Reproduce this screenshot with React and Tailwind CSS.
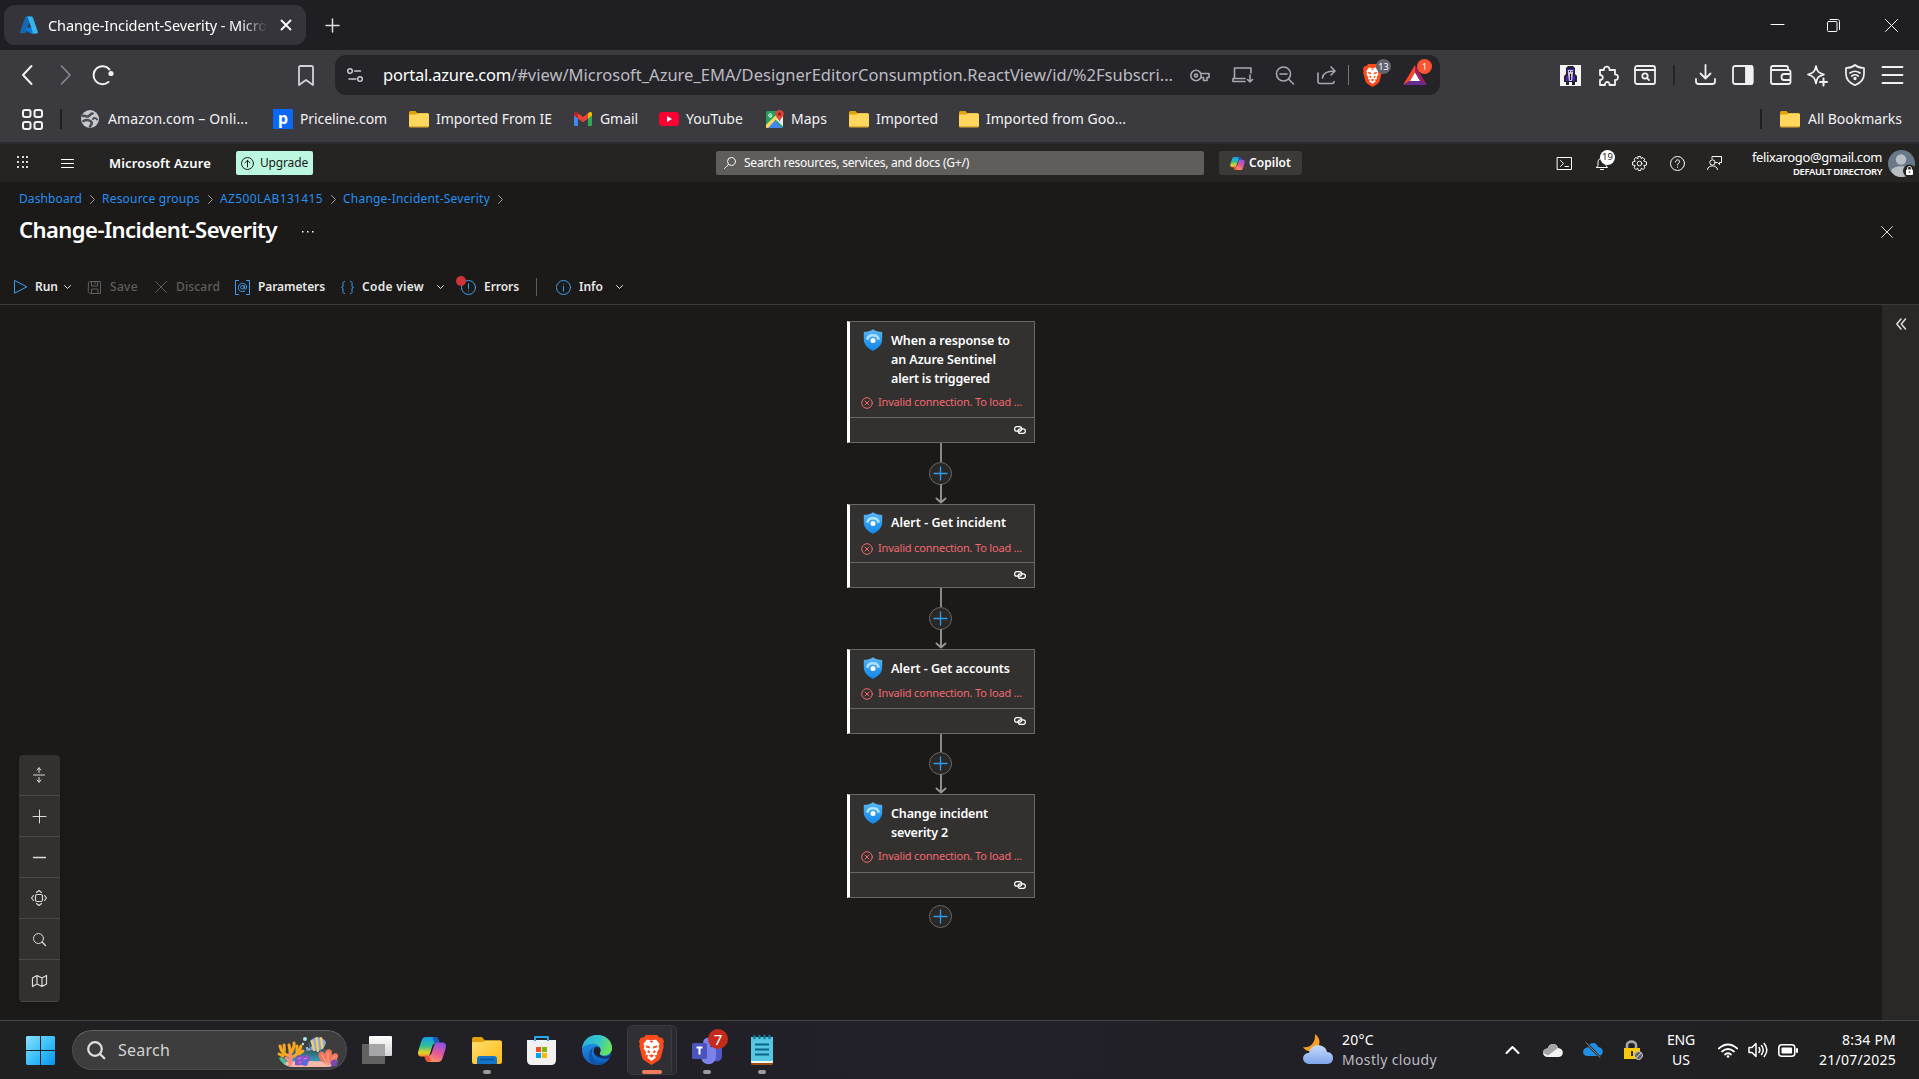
import React, { useLayoutEffect, useRef, useState } from "react";

/* Text that tracks itself in or out so that it fills a given width */
function Fit({ w, className = "", children }) {
  const ref = useRef(null);
  const [spacing, setSpacing] = useState(0);
  useLayoutEffect(() => {
    const natural = ref.current.getBoundingClientRect().width;
    setSpacing((w - natural) / String(children).length);
  }, [w, children]);
  return (
    <span className={"block shrink-0 whitespace-nowrap " + className} style={{ width: w }}>
      <span ref={ref} className="inline-block" style={{ letterSpacing: spacing }}>{children}</span>
    </span>
  );
}

function Icon({ w, h, vb, className = "", sw = 1, children }) {
  return (
    <svg width={w} height={h || w} viewBox={vb || `0 0 ${w} ${h || w}`} fill="none" stroke="currentColor" strokeWidth={sw}
      strokeLinecap="round" strokeLinejoin="round" className={"block shrink-0 overflow-visible " + className}>
      {children}
    </svg>
  );
}

function AzureLogo() {
  return (
    <Icon w={18} h={18} className="ml-4">
      <g stroke="none">
        <path d="M6 0.5H11.5L5.6 17.3H1.2C.3 17.3-.2 16.5.1 15.7L5.2 1.1C5.3.7 5.6.5 6 .5Z" fill="#1566b3" />
        <path d="M14 11.5H6.4L5.6 14.2 10.5 17.5H15.5Z" fill="#0a78d4" />
        <path d="M7 .5H11.8C12.2.5 12.6.8 12.8 1.2L17.8 15.8C18.1 16.6 17.6 17.4 16.8 17.4H11.6C12.4 17.3 12.9 16.6 12.6 15.8L7.6 1.2C7.5.8 7.3.6 7 .5Z" fill="#35b4ee" />
      </g>
    </Icon>
  );
}

function Folder({ className = "" }) {
  return (
    <Icon w={20} h={17} className={className}>
      <path d="M0 2C0 .9.6 0 1.6 0H6.5L8.5 2.2H18.4C19.4 2.2 20 3 20 4V14H0Z" fill="#dfa20d" stroke="none" />
      <path d="M0 4.6C0 3.6.6 3.4 1.6 3.4H7L9 2.2H18.4C19.4 2.2 20 3 20 4V14.6C20 15.6 19.4 16.2 18.4 16.2H1.6C.6 16.2 0 15.6 0 14.6Z" fill="#ffd75e" stroke="none" />
      <path d="M.4 15.8H19.6" stroke="#d9a021" />
    </Icon>
  );
}

function Copilot({ w, h, className = "" }) {
  return (
    <Icon w={w} h={h} vb="0 0 28 25" className={className}>
      <defs>
        <linearGradient id="cpA" x1="0" y1="0" x2="0" y2="1"><stop offset="0" stopColor="#189dea" /><stop offset=".45" stopColor="#2bbd9a" /><stop offset=".8" stopColor="#e5d322" /><stop offset="1" stopColor="#f08b35" /></linearGradient>
        <linearGradient id="cpB" x1=".7" y1="0" x2=".3" y2="1"><stop offset="0" stopColor="#8a52e8" /><stop offset=".5" stopColor="#e2569a" /><stop offset="1" stopColor="#ff9a58" /></linearGradient>
      </defs>
      <g stroke="none">
        <path d="M8 0H17C19.5 0 20.3 2 20.9 4L21.6 6.3H17.5C15.7 6.3 14.8 7.6 14.2 9.4L11.6 17.4C11 19 10 19.6 8.4 19.6H3.6C.2 19.6-.6 17 .4 13.5L3.4 4C4.2 1.4 5.4 0 8 0Z" fill="url(#cpA)" />
        <path d="M15.5 0H17.4C19.6 0 20.4 2 20.9 4L21.6 6.3H17.8C16 6.3 15.6 3 14.6 1Z" fill="#1859c9" />
        <path d="M20 25H11C8.5 25 7.7 23 7.1 21L6.4 18.7H10.5C12.3 18.7 13.2 17.4 13.8 15.6L16.4 7.6C17 6 18 5.4 19.6 5.4H24.4C27.8 5.4 28.6 8 27.6 11.5L24.6 21C23.8 23.6 22.6 25 20 25Z" fill="url(#cpB)" />
        <path d="M6.4 18.7H10.2C11.5 18.7 12 22 13.4 24.8H11C8.5 25 7.7 23 7.1 21Z" fill="#ee5436" />
      </g>
    </Icon>
  );
}

function Brave({ w, h, className = "" }) {
  return (
    <Icon w={w} h={h} vb="0 0 25 30" className={className}>
      <g stroke="none">
        <path d="M7 0H18L20.5 2.5 23.2 2.8 25 6.2 24.2 9 24.8 11 22 22C21.6 23.6 20.6 24.8 19.2 25.8L12.5 30 5.8 25.8C4.4 24.8 3.4 23.6 3 22L.2 11 .8 9 0 6.2 1.8 2.8 4.5 2.5Z" fill="#fb4b1d" />
        <path d="M8 4.6 12.5 5.6 17 4.6 20.6 9 19.6 11 20.4 13.4 17.8 17.6 18.6 19.5 15.4 20.6 17 22.6 12.5 26 8 22.6 9.6 20.6 6.4 19.5 7.2 17.6 4.6 13.4 5.4 11 4.4 9Z" fill="#fff" />
        <path d="M6.5 10.2 11 11.4 10.6 13.4 7.2 12.4ZM18.5 10.2 14 11.4 14.4 13.4 17.8 12.4ZM9.6 15 11.2 17.2 10.2 18.6 8 16.6ZM15.4 15 13.8 17.2 14.8 18.6 17 16.6ZM12.5 19.2 15 20.6 12.5 22.8 10 20.6ZM10.5 6 12.5 8 14.5 6Z" fill="#fb4b1d" />
      </g>
    </Icon>
  );
}

function Shield() {
  return (
    <Icon w={20} h={22} className="mt-[7px]">
      <defs><linearGradient id="shG" x1="0" y1="0" x2="0" y2="1"><stop offset="0" stopColor="#5cb8f5" /><stop offset=".5" stopColor="#2f9df0" /><stop offset="1" stopColor="#1487e6" /></linearGradient></defs>
      <path d="M10 .2C12.5 2.2 15.5 2.8 19.2 2.9V10.5C19.2 16 14.5 19.6 10 21.8 5.5 19.6 .8 16 .8 10.5V2.9C4.5 2.8 7.5 2.2 10 .2Z" fill="url(#shG)" stroke="none" />
      <path d="M4.200 10.600C5.600 4.800 14.400 4.800 15.800 10.600" stroke="#aee3fb" strokeWidth="2.600" strokeLinecap="butt" />
      <circle cx="10" cy="11.600" r="2.500" fill="#fff" stroke="none" />
    </Icon>
  );
}

function ChevDown({ className = "" }) {
  return <Icon w={7} h={4} className={className}><path d="M.5 .5 3.500 3.500 6.500 .5" /></Icon>;
}
function Crumb() {
  return <Icon w={5} h={9} className="ml-[8px] mr-[7px] text-[#a19f9d]"><path d="M.5 .5 4.500 4.500 .5 8.500" /></Icon>;
}

function TabStrip() {
  return (
    <div className="flex h-[50px] items-center bg-[#1f1e23] pl-1 text-white">
      <div className="flex h-10 w-[302px] items-center rounded-[11px] bg-[#35343a]">
        <AzureLogo />
        <div className="ml-[10px] w-[219px] [mask-image:linear-gradient(to_right,black_88%,transparent)]">
          <Fit w={219} className="text-[14.500px] leading-5">Change-Incident-Severity - Micro</Fit>
        </div>
        <Icon w={10} sw={1.800} className="ml-[14px]"><path d="M.5 .5 9.500 9.500M9.500 .5 .5 9.500" /></Icon>
      </div>
      <Icon w={13} sw={1.500} className="ml-[20px] text-[#ddd]"><path d="M6.500 0V13M0 6.500H13" /></Icon>
      <Icon w={13} h={12} className="ml-auto"><path d="M0 5.500H13" /></Icon>
      <Icon w={13} h={13} className="ml-[43px]"><rect x=".5" y="2.500" width="9.500" height="10" rx="1" /><path d="M3 .5H10.500C11.800.5 12.500 1.200 12.500 2.500V10.500" /></Icon>
      <Icon w={13} h={13} className="ml-[45px] mr-[21px]"><path d="M.5 .5 12.500 12.500M12.500 .5 .5 12.500" /></Icon>
    </div>
  );
}

function AddressRow() {
  return (
    <div className="flex h-[50px] items-center text-[#f0f0f2]">
      <Icon w={10} h={18} sw={2} className="ml-[22px]"><path d="M9.500 0 1 9 9.500 18" /></Icon>
      <Icon w={10} h={18} sw={1.600} className="ml-[29px] text-[#8b8a90]"><path d="M.5 0 9 9 .5 18" /></Icon>
      <Icon w={22} h={20} sw={2} className="ml-[21px]"><path d="M16.500 17A9 9 0 1 1 17.500 4.500" /><circle cx="19" cy="8.500" r="2.600" fill="currentColor" stroke="none" /></Icon>
      <Icon w={16} h={21} sw={1.800} className="ml-[184px] text-[#d3d2d8]"><path d="M2.500 1H13.500Q15 1 15 2.500V20L8 15 1 20V2.500Q1 1 2.500 1Z" /></Icon>
      <div className="ml-[21px] flex h-10 w-[1105px] items-center rounded-[11px] bg-[#252429] text-[#a9a8af]">
        <Icon w={16} h={14} sw={1.500} className="ml-[12px] text-[#c8c7ce]"><circle cx="3" cy="3" r="2.300" /><path d="M7.500 3H13.500M2 11H9" /><circle cx="13" cy="11" r="2.300" /></Icon>
        <Fit w={128} className="ml-5 text-[16.500px] leading-6 text-white">portal.azure.com</Fit>
        <Fit w={662} className="text-[16.500px] leading-6 text-[#bdbcc3]">/#view/Microsoft_Azure_EMA/DesignerEditorConsumption.ReactView/id/%2Fsubscri...</Fit>
        <Icon w={20} h={13} sw={1.600} className="ml-[17px]"><circle cx="6" cy="6.500" r="5.200" /><circle cx="6" cy="6.500" r="1.500" /><path d="M10.800 4.500H19V8.500H17V11.500H13.500V8.500H11" /></Icon>
        <Icon w={21} h={16} sw={1.600} className="ml-[22px]"><path d="M13 14.500H1V11.500H13M2.500 11.500V1H19V6M18 8V15M15.500 12.500 18 15 20.500 12.500" /></Icon>
        <Icon w={20} h={18} sw={1.600} className="ml-[22px]"><circle cx="8.500" cy="8" r="7" /><path d="M5 8H12M13.500 13 18.500 18" /></Icon>
        <Icon w={20} h={18} sw={1.600} className="ml-[22px]"><path d="M1 7V15.500Q1 17.500 3 17.500H15Q17 17.500 17 15.500M5.500 12C6 7 10 5 17.500 5M14 1 18 5 14 9" /></Icon>
        <div className="ml-[11px] h-5 w-px bg-[#77767d]" />
        <div className="relative ml-[14px]">
          <Brave w={19} h={23} />
          <span className="absolute -top-[5px] left-[13px] grid size-[15px] place-items-center rounded-full bg-[#62636f] text-[9px] leading-none text-white">13</span>
        </div>
        <div className="relative ml-[21px]">
          <Icon w={24} h={20}><g stroke="none"><path d="M12 0 0 20 7 16 12 7.500Z" fill="#ff4724" /><path d="M12 0 24 20 17 16 12 7.500Z" fill="#9e1f63" /><path d="M0 20H24L17 16H7Z" fill="#662d91" /><path d="M12 7.500 17 16H7Z" fill="#fff" /></g></Icon>
          <span className="absolute -top-[6px] left-[14px] grid size-[15px] place-items-center rounded-full bg-[#fb5430] text-[9px] leading-none text-white">1</span>
        </div>
      </div>
      <Icon w={21} className="ml-[120px]">
        <rect width="21" height="21" fill="#f4f4f6" stroke="none" />
        <g stroke="none"><path d="M6 3 8 1H13L15 3V9L17 11V17H15V20H12V17H9V20H6V17H4V11L6 9Z" fill="#24202e" /><path d="M7 4H14V8H7ZM6 11H15V16H6Z" fill="#4a23b5" /><path d="M8 5H13V8L12 16H9L8 9Z" fill="#c9c5d6" /><path d="M9 6H10V7H9ZM11.500 6H12.500V7H11.500ZM10 9H11V15H10Z" fill="#111" /></g>
      </Icon>
      <Icon w={21} sw={1.800} className="ml-[17px]"><path d="M2 5H6C5 1 12 0 11.500 5H17V9.500C21 9 21 15.500 17 15V20H11.500C12 16 6.500 16 7 20H2V15C5.500 15 6 10 2 10Z" /></Icon>
      <Icon w={22} h={20} sw={1.800} className="ml-[15px]"><rect x="1" y="1" width="20" height="18" rx="2" /><path d="M1 5H21" /><circle cx="11" cy="11" r="2.700" /><path d="M13 13 15 15.200" /></Icon>
      <div className="ml-[17px] h-5 w-[2px] bg-[#242328]" />
      <Icon w={21} h={20} sw={1.800} className="ml-[20px]"><path d="M10.500 0V13M5.500 8.500 10.500 13.500 15.500 8.500M1 14V16.500Q1 19 3.500 19H17.500Q20 19 20 16.500V14" /></Icon>
      <Icon w={22} h={20} sw={1.800} className="ml-[16px]"><rect x="1" y="1" width="19.500" height="18" rx="2" /><path d="M14 1H19Q20.500 1 20.500 3V17Q20.500 19 19 19H14Z" fill="currentColor" /></Icon>
      <Icon w={22} h={20} sw={1.800} className="ml-[16px]"><path d="M18 5V3Q18 1 16 1H3Q1 1 1 3V17Q1 19 3 19H18Q20.500 19 20.500 17V7Q20.500 5 18 5H1M20.500 9H14Q11.500 9 11.500 12T14 15H20.500" /></Icon>
      <Icon w={21} h={21} sw={1.700} className="ml-[15px]"><path d="M9 1C10 6.500 11.500 8 17 9.500 14 10.500 12 11 11 12.500 10 14 9.500 15.500 9 18.500 8 13 6.500 11 1 9.500 6.500 8 8 6.500 9 1Z" /><path d="M16.500 13.500V20.500M13 17H20" strokeWidth="2" /></Icon>
      <Icon w={20} h={22} sw={1.700} className="ml-[17px]"><path d="M10 1C13 3.500 16 4 19 4V10C19 15.500 15.500 19 10 21.200 4.500 19 1 15.500 1 10V4C4 4 7 3.500 10 1Z" /><path d="M5 9Q10 5.500 15 9M6.800 12Q10 9.500 13.200 12" /><circle cx="10" cy="14.500" r=".8" fill="currentColor" /></Icon>
      <Icon w={21} h={18} sw={1.800} className="ml-[17px]"><path d="M.5 1H20.500M.5 9H20.500M.5 17H20.500" /></Icon>
    </div>
  );
}

function BookmarksRow() {
  const t = "text-[14px] leading-5";
  return (
    <div className="flex h-[38px] items-center text-[#f2f2f4]">
      <Icon w={21} h={21} sw={2} className="ml-[22px]"><rect x="1" y="1" width="7.500" height="7" rx="2" /><rect x="12.500" y="1" width="7.500" height="7" rx="2" /><rect x="1" y="13" width="7.500" height="7" rx="2" /><rect x="12.500" y="13" width="7.500" height="7" rx="2" /></Icon>
      <div className="ml-[17px] h-5 w-[2px] bg-[#1f1e23]" />
      <Icon w={18} className="ml-[19px]"><circle cx="9" cy="9" r="9" fill="#c6c8ce" stroke="none" /><path d="M2 6C4 5 5 7 7 6.500S9 3.500 11.500 3.500M2.500 11C5 9.500 8 10 10 11.500S10 15 9 16.500" stroke="#4c4d53" strokeWidth="2.600" /><path d="M12 9C13 7.500 15 8 16 9.500" stroke="#4c4d53" strokeWidth="2" /></Icon>
      <Fit w={140} className={"ml-[9px] " + t}>Amazon.com – Onli...</Fit>
      <div className="ml-[25px] grid h-5 w-5 place-items-center bg-[#0a68f5] text-[16px] font-bold leading-none text-white"><span className="-mt-[3px]">p</span></div>
      <Fit w={87} className={"ml-[7px] " + t}>Priceline.com</Fit>
      <Folder className="ml-[22px]" />
      <Fit w={116} className={"ml-[7px] " + t}>Imported From IE</Fit>
      <Icon w={18} h={14} className="ml-[22px]"><g stroke="none"><path d="M0 2V13Q0 14 1.200 14H4V6Z" fill="#4285f4" /><path d="M18 2V13Q18 14 16.800 14H14V6Z" fill="#34a853" /><path d="M14 1.500V6.500L18 3.500V2C18 0 16-.5 14.600.7Z" fill="#fbbc04" /><path d="M4 1.500V6.500L0 3.500V2C0 0 2-.5 3.400.7Z" fill="#c5221f" /><path d="M4 1.200 9 5 14 1.200V6.500L9 10.300 4 6.500Z" fill="#ea4335" /></g></Icon>
      <Fit w={38} className={"ml-[8px] " + t}>Gmail</Fit>
      <Icon w={20} h={14} className="ml-[21px]"><rect width="20" height="14" rx="3.500" fill="#ff0033" stroke="none" /><path d="M8 4 13 7 8 10Z" fill="#fff" stroke="none" /></Icon>
      <Fit w={57} className={"ml-[7px] " + t}>YouTube</Fit>
      <Icon w={18} h={18} className="ml-[23px]"><g stroke="none"><rect y="1" width="17" height="17" rx="1.500" fill="#24a05a" /><path d="M17 4V16.500L9.500 9.500Z" fill="#e8e9ec" /><path d="M2 18 9 10.500 16 18Z" fill="#4286f5" /><path d="M0 15 12 3 14 5 2 18H1Q0 18 0 17Z" fill="#fdd663" /><path d="M13.500 0C16 0 17.800 1.800 17.800 4 17.800 6.500 14.500 8 13.500 12 12.500 8 9.200 6.500 9.200 4 9.200 1.800 11 0 13.500 0Z" fill="#e04437" /><circle cx="13.500" cy="4" r="1.500" fill="#7c1c14" /></g><path d="M5.500 4.200A1.700 1.700 0 1 0 6 5.800H4.600" stroke="#fff" /></Icon>
      <Fit w={36} className={"ml-[7px] " + t}>Maps</Fit>
      <Folder className="ml-[22px]" />
      <Fit w={62} className={"ml-[7px] " + t}>Imported</Fit>
      <Folder className="ml-[21px]" />
      <Fit w={140} className={"ml-[7px] " + t}>Imported from Goo...</Fit>
      <div className="ml-auto h-5 w-[2px] bg-[#1f1e23]" />
      <Folder className="ml-[18px]" />
      <Fit w={94} className={"ml-[8px] mr-[17px] " + t}>All Bookmarks</Fit>
    </div>
  );
}

function AzureHeader() {
  return (
    <div className="flex h-[38px] items-center bg-[#252423] text-white">
      <div className="-mt-[2px] ml-[17px] grid w-[11px] grid-cols-3 gap-[3px]">
        {[...Array(9)].map((_, i) => <i key={i} className="size-[2px] bg-[#d8d8d8]" />)}
      </div>
      <Icon w={13} h={9} className="ml-[33px]"><path d="M.5 .5H12.500M.5 4.500H12.500M.5 8.500H12.500" /></Icon>
      <Fit w={102} className="ml-[35px] text-[13px] font-semibold leading-5">Microsoft Azure</Fit>
      <div className="ml-[25px] flex h-6 w-[77px] items-center rounded-[2px] bg-[#bcf7e0] text-[#1b1a19]">
        <Icon w={13} className="ml-[5px]"><circle cx="6.500" cy="6.500" r="6" /><path d="M6.500 10V3.500M4 5.800 6.500 3.300 9 5.800" /></Icon>
        <Fit w={48} className="ml-[6px] text-[12px] leading-5">Upgrade</Fit>
      </div>
      <div className="ml-[403px] flex h-6 w-[488px] items-center rounded-[2px] bg-[#605e5c]">
        <Icon w={12} h={12} className="ml-[8px]"><circle cx="7.500" cy="4.500" r="4" /><path d="M4.600 7.400.5 11.500" /></Icon>
        <Fit w={225} className="ml-[8px] text-[12px] leading-5">Search resources, services, and docs (G+/)</Fit>
      </div>
      <div className="ml-[15px] flex h-6 w-[83px] items-center rounded-[3px] bg-[#3b3a39]">
        <Copilot w={15} h={13} className="ml-[11px]" />
        <Fit w={42} className="ml-[4px] text-[12px] font-semibold leading-5">Copilot</Fit>
      </div>
      <Icon w={15} h={13} className="ml-[255px]"><rect x=".5" y=".5" width="14" height="12" /><path d="M3.500 3.500 6.500 6.500 3.500 9.500M8 9.500H11.500" /></Icon>
      <div className="relative ml-[24px]">
        <Icon w={12} h={13}><path d="M.5 10.500H11.500L10 8.500V5C10 0 2 0 2 5V8.500L.5 10.500M4.500 12.500H7.500" /></Icon>
        <span className="absolute -top-[7px] left-[4px] grid size-[15px] place-items-center rounded-full bg-white text-[9.500px] leading-none text-[#1b1a19]">19</span>
      </div>
      <Icon w={15} className="ml-[24px]"><circle cx="7.500" cy="7.500" r="2.300" /><path d="M6.300.5H8.700L9.200 2.600 11 1.500 12.700 3.200 11.600 5 14.500 6V9L11.800 9.500 12.900 11.800 11.200 13.400 9.300 12.200 8.700 14.500H6.300L5.700 12.200 3.800 13.400 2.100 11.800 3.200 9.500.5 9V6L3.200 5.300 2.100 3.200 3.800 1.500 5.700 2.600Z" /></Icon>
      <Icon w={15} className="ml-[23px]"><circle cx="7.500" cy="7.500" r="7" /><path d="M5.500 6C5.500 3 9.700 3.200 9.600 5.800 9.500 7.300 7.500 7.200 7.500 9M7.500 11V11.300" /></Icon>
      <Icon w={15} h={14} className="ml-[22px]"><circle cx="5.500" cy="6.500" r="2.700" /><path d="M.5 13.500C1 8.500 10 8.500 10.500 13.500M5 2.500V.5H14.500V6.500H12.500V8.500L10.500 6.500H9.500" /></Icon>
      <div className="ml-auto flex flex-col items-end">
        <Fit w={130} className="text-[13px] leading-[17px]">felixarogo@gmail.com</Fit>
        <Fit w={89} className="text-[9.500px] font-semibold leading-[12px]">DEFAULT DIRECTORY</Fit>
      </div>
      <Icon w={27} h={27} className="ml-[6px] mr-[4px]">
        <g stroke="none"><circle cx="13.500" cy="13.500" r="13.500" fill="#69798a" /><circle cx="13" cy="9.500" r="5.200" fill="#b9bec4" /><path d="M3 21C4 14.500 22 14.500 23 21 20 26 17 27 13.500 27 9 27 6 25.500 3 21Z" fill="#b9bec4" /><circle cx="21.500" cy="21" r="6.500" fill="#252423" /><rect x="18" y="19.500" width="7" height="5.500" rx="1" fill="#fff" /><circle cx="21.500" cy="22" r=".8" fill="#252423" /></g>
        <path d="M19.700 19.500V18C19.700 16 23.300 16 23.300 18V19.500" />
      </Icon>
    </div>
  );
}

function BladeHeader() {
  return (
    <div className="h-[83px] pt-px">
      <div className="flex h-8 items-center pl-[19px] text-[12px] leading-5 text-[#2490f2]">
        <Fit w={63}>Dashboard</Fit><Crumb />
        <Fit w={98}>Resource groups</Fit><Crumb />
        <Fit w={103}>AZ500LAB131415</Fit><Crumb />
        <Fit w={147}>Change-Incident-Severity</Fit><Crumb />
      </div>
      <div className="flex h-[28px] items-center pl-[19px] text-white">
        <Fit w={258} className="text-[22px] font-semibold leading-7">Change-Incident-Severity</Fit>
        <Icon w={12} h={2} className="ml-[25px] mt-[5px]"><g fill="currentColor" stroke="none"><rect width="1.500" height="1.500" /><rect x="5" width="1.500" height="1.500" /><rect x="10" width="1.500" height="1.500" /></g></Icon>
        <Icon w={12} className="ml-auto mr-[26px] mt-[5px] text-[#ddd]"><path d="M.5 .5 11.500 11.500M11.500 .5 .5 11.500" /></Icon>
      </div>
    </div>
  );
}

function CommandBar() {
  const t = "text-[12px] leading-5 ";
  return (
    <div className="flex h-[40px] items-center border-b border-[#3b3a39] pt-[5px] text-[#e8e8e8]">
      <Icon w={13} h={14} className="ml-[14px] text-[#3aa0f3]"><path d="M.5 .8V13.200L12.500 7Z" /></Icon>
      <Fit w={23} className={"ml-[8px] font-semibold " + t}>Run</Fit>
      <ChevDown className="ml-[6px]" />
      <Icon w={13} className="ml-[17px] text-[#605e5c]"><path d="M.5 1.500Q.5.500 1.500.5H12.500V12.500H2L.5 11ZM3.500.5V5H9.500V.5M3.500 12.500V8H10V12.500M7 1.500V3" /></Icon>
      <Fit w={28} className={"ml-[9px] font-medium text-[#605e5c] " + t}>Save</Fit>
      <Icon w={12} className="ml-[17px] text-[#605e5c]"><path d="M.5 .5 11.500 11.500M11.500 .5 .5 11.500" /></Icon>
      <Fit w={44} className={"ml-[9px] font-medium text-[#605e5c] " + t}>Discard</Fit>
      <Icon w={15} h={15} className="ml-[15px] text-[#3aa0f3]"><path d="M3.500.5H.5V14.500H3.500M11.500.5H14.500V14.500H11.500" /><circle cx="7.500" cy="7.300" r="1.800" /><path d="M9.300 5.500V8.500C10 9.800 11.800 9 11.600 7 11.300 1.800 3.500 2 3.300 7.500 3.200 11.500 7.500 12.500 9.800 10.900" /></Icon>
      <Fit w={67} className={"ml-[8px] font-semibold " + t}>Parameters</Fit>
      <Icon w={13} h={13} className="ml-[16px] text-[#3aa0f3]"><path d="M3.500.5C1.500.5 2 2 2 4S1.500 6.500.5 6.500C1.500 6.500 2 7 2 9S1.500 12.500 3.500 12.500M9.500.5C11.500.5 11 2 11 4S11.500 6.500 12.500 6.500C11.500 6.500 11 7 11 9S11.500 12.500 9.500 12.500" /></Icon>
      <Fit w={62} className={"ml-[8px] font-semibold " + t}>Code view</Fit>
      <ChevDown className="ml-[13px]" />
      <div className="relative ml-[17px]">
        <Icon w={15} className="text-[#3aa0f3]"><circle cx="7.500" cy="7.500" r="7" /><path d="M7.500 3.800V8.500M7.500 10.800V11" /></Icon>
        <i className="absolute -left-[5px] -top-[4px] size-[10px] rounded-full bg-[#d13438]" />
      </div>
      <Fit w={35} className={"ml-[8px] font-semibold " + t}>Errors</Fit>
      <div className="ml-[17px] h-[18px] w-px bg-[#605e5c]" />
      <Icon w={15} className="ml-[19px] text-[#3aa0f3]"><circle cx="7.500" cy="7.500" r="7" /><path d="M7.500 6.500V11M7.500 4V4.200" /></Icon>
      <Fit w={24} className={"ml-[8px] font-semibold " + t}>Info</Fit>
      <ChevDown className="ml-[13px]" />
    </div>
  );
}

function Node({ height, lines, nudge = "mt-[9px]" }) {
  return (
    <div className={"flex w-[188px] flex-col border border-l-[3px] border-[#6a6866] border-l-white bg-[#323130] " + height}>
      <div className="flex pl-[13px]">
        <Shield />
        <div className={"ml-[8px] " + nudge}>
          {lines.map(([text, w]) => (
            <Fit key={text} w={w} className="text-[12.500px] font-semibold leading-[19px] text-white">{text}</Fit>
          ))}
        </div>
      </div>
      <div className="mt-[4px] flex h-5 items-center pl-[11px] text-[#f5686f]">
        <Icon w={12} className="mt-px"><circle cx="6" cy="6" r="5.300" /><path d="M4 4 8 8M8 4 4 8" /></Icon>
        <Fit w={144} className="ml-[5px] text-[11px] leading-5">Invalid connection. To load ...</Fit>
      </div>
      <div className="mt-auto flex h-[25px] items-center justify-end border-t border-[#6a6866] pb-px pr-[8px] text-white">
        <Icon w={12} h={8} sw={1.200}><rect x=".6" y=".6" width="7.200" height="4.600" rx="2.300" /><rect x="4" y="2.800" width="7.400" height="4.600" rx="2.300" /></Icon>
      </div>
    </div>
  );
}

function Plus() {
  return (
    <div className="grid size-[23px] shrink-0 place-items-center rounded-full border border-[#6a6866] bg-[#292827] text-[#2f9cf0]">
      <Icon w={13}><path d="M6.500 0V13M0 6.500H13" strokeWidth="1.300" /></Icon>
    </div>
  );
}

function Edge({ height }) {
  return (
    <div className={"mr-px flex flex-col items-center " + height}>
      <div className="h-[19px] w-[2px] bg-[#8a8886]" />
      <Plus />
      <Icon w={12} className="text-[#979593]" h={19} sw={1.900}><path d="M6 0V17.500M1.500 13.500 6 17.500 10.500 13.500" /></Icon>
    </div>
  );
}

function ZoomTools() {
  const c = "grid h-[41px] place-items-center border-b border-[#4a4846] pr-px";
  return (
    <div className="absolute bottom-[18px] left-[19px] w-[41px] overflow-hidden rounded-[4px] bg-[#323130] text-[#dedcda] shadow-md">
      <div className={c}><Icon w={12} h={16}><path d="M.5 8H11.500M6 .8V5.500M6 10.500V15.200M4 3 6 .8 8 3M4 13 6 15.200 8 13" /></Icon></div>
      <div className={c}><Icon w={13}><path d="M6.500 0V13M0 6.500H13" /></Icon></div>
      <div className={c}><Icon w={13} h={3}><path d="M.5 1.500H12.500" strokeWidth="1.300" /></Icon></div>
      <div className={c}><Icon w={16} sw={1.150}><rect x="4.500" y="4.500" width="7" height="7" rx="1.500" /><path d="M5.500 2.500 8 .5 10.500 2.500M5.500 13.500 8 15.500 10.500 13.500M2.500 5.500.5 8 2.500 10.500M13.500 5.500 15.500 8 13.500 10.500" /></Icon></div>
      <div className={c}><Icon w={13}><circle cx="5.500" cy="5.500" r="5" /><path d="M9 9 12.500 12.500" strokeWidth="1.300" /></Icon></div>
      <div className="grid h-[42px] place-items-center border-b border-[#4a4846]"><Icon w={15} h={12} sw={1.200}><path d="M.5 3 5 .5 10 3 14.500 .5V9L10 11.500 5 9 .5 11.500ZM5 .5V9M10 3V11.500" /></Icon></div>
    </div>
  );
}

function Designer() {
  return (
    <div className="relative flex h-[715px]">
      <div className="flex w-[1882px] flex-col items-center pt-[16px]">
        <Node height="h-[122px]" lines={[["When a response to", 119], ["an Azure Sentinel", 105], ["alert is triggered", 99]]} />
        <Edge height="h-[61px]" />
        <Node height="h-[84px]" nudge="mt-[8px]" lines={[["Alert - Get incident", 115]]} />
        <Edge height="h-[61px]" />
        <Node height="h-[85px]" lines={[["Alert - Get accounts", 119]]} />
        <Edge height="h-[60px]" />
        <Node height="h-[104px]" lines={[["Change incident", 97], ["severity 2", 57]]} />
        <div className="mr-px mt-[7px]"><Plus /></div>
      </div>
      <div className="w-[37px] bg-[#292827] pl-[14px] pt-[13px] text-[#e0dfde]">
        <Icon w={10} h={12} sw={1.500}><path d="M5 1 .8 6 5 11M9.500 1 5.300 6 9.500 11" /></Icon>
      </div>
      <ZoomTools />
    </div>
  );
}

function TaskItem({ children, left, on, className = "" }) {
  return (
    <div className={"flex h-full flex-col items-center " + left + " " + className}>
      <div className="mt-[14px] flex h-[30px] items-center">{children}</div>
      {on && <i className="mt-[5px] h-1 w-2 rounded-full bg-[#9b9b9d]" />}
    </div>
  );
}

function Coral() {
  return (
    <Icon w={62} h={31} className="absolute right-[6px] top-[5px]">
      <defs><linearGradient id="seaG" x1="0" y1="0" x2="0" y2="1"><stop offset="0" stopColor="#2f7f95" stopOpacity="0" /><stop offset=".6" stopColor="#2f8fa6" /><stop offset="1" stopColor="#51b6bd" /></linearGradient></defs>
      <path d="M4 26C12 12 22 10 31 9S52 14 60 25C58 29 53 31 47 31H16C10 31 6 29 4 26Z" fill="url(#seaG)" stroke="none" />
      <path d="M5 27C12 24 50 25 59 27 56 30 52 31 47 31H16C11 31 7 29 5 27Z" fill="#f4b9a8" stroke="none" />
      <path d="M12 28C12 20 13 16 11 9M12 20C6 19 3 15 2 10M12 22C18 20 22 16 23 10M12 18C15 14 17 11 16 7M6 17C7 14 6 11 6 9M19 18C22 18 24 16 25 15M5 20 1 18M19 16 19 10" stroke="#f7a823" strokeWidth="3" />
      <path d="M12 29C13 26 13 22 12 18M12 26 8 22" stroke="#f58a83" strokeWidth="3" />
      <path d="M1 22C4 20 7 23 8 28 4 27 2 25 1 22Z" fill="#47c28d" stroke="none" />
      <path d="M17 25C17 20 22 18 25 20 30 17 34 21 32 24 30 28 24 30 17 29Z" fill="#8754c4" stroke="none" />
      <circle cx="27" cy="27" r="3" fill="#5a6bdb" stroke="none" />
      <path d="M20 23 23 22M26 23 29 22M21 27 23 26" stroke="#c790ec" />
      <path d="M50 29C44 26 39 22 41 17 43 14 46 16 47 18 47 14 50 12 53 14 55 16 53 19 54 19 57 16 61 17 60 21 59 25 54 27 50 29Z" fill="#f2765a" stroke="none" />
      <path d="M49 28 44 19M50 28 50 17M51 28 57 20" stroke="#ffb199" />
      <circle cx="56" cy="27" r="3.500" fill="#7c48ad" stroke="none" />
      <path d="M28 14 34 10 32 5C37 0 44 0 48 6 47 13 41 17 34 14L29 15Z" fill="#8fa9dc" stroke="none" />
      <path d="M34 5 36 14M38.500 2 40 15M43 2 44.500 12" stroke="#f8cf63" strokeWidth="2.200" />
      <path d="M31 7 33 14" stroke="#5574c9" />
      <circle cx="27" cy="3" r="2" fill="#a9e4f2" stroke="none" /><circle cx="25" cy="8" r="1.200" fill="#a9e4f2" stroke="none" /><circle cx="29" cy="12" r="1" fill="#a9e4f2" stroke="none" />
    </Icon>
  );
}

function Taskbar() {
  return (
    <div className="flex h-[59px] border-t border-[#464646] bg-linear-to-r from-[#202021] via-[#222029] to-[#202020] text-white">
      <TaskItem left="ml-[26px]">
        <Icon w={29} className="mt-px"><defs><linearGradient id="winG" x1="0" y1="0" x2="1" y2="1"><stop offset="0" stopColor="#8de0ff" /><stop offset=".5" stopColor="#3cc1fa" /><stop offset="1" stopColor="#0a93f0" /></linearGradient></defs><path d="M1 0H14V14H0V1ZM15 0H28L29 1V14H15ZM0 15H14V29H1L0 28ZM15 15H29V28L28 29H15Z" fill="url(#winG)" stroke="none" /></Icon>
      </TaskItem>
      <div className="relative ml-[17px] mt-[9px] flex h-10 w-[275px] items-center rounded-full border border-[#4d4d4d] border-t-[#636363] bg-[#3d3d3d]">
        <Icon w={18} sw={2.200} className="ml-[14px] text-[#e0e0e0]"><circle cx="8" cy="8" r="6.800" /><path d="M13 13 17.300 17.300" /></Icon>
        <Fit w={52} className="ml-[13px] text-[16px] leading-6 text-[#d4d4d4]">Search</Fit>
        <Coral />
      </div>
      <TaskItem left="ml-[15px]">
        <Icon w={30} h={28}><defs><linearGradient id="tvG" x1="0" y1="0" x2="0" y2="1"><stop offset="0" stopColor="#fff" /><stop offset="1" stopColor="#d4d4d4" /></linearGradient></defs><g stroke="none"><rect y="8" width="23" height="20" rx="1" fill="#626262" /><rect x="7" width="23" height="20" rx="1" fill="url(#tvG)" /><rect x="7" y="8" width="16" height="12" fill="#a5a5a7" /></g></Icon>
      </TaskItem>
      <TaskItem left="ml-[26px]"><Copilot w={28} h={25} className="-mt-px" /></TaskItem>
      <TaskItem left="ml-[26px]" on>
        <Icon w={30} h={27} className="mt-px"><defs><linearGradient id="exG" x1="0" y1="0" x2="1" y2="1"><stop offset="0" stopColor="#ffdf6e" /><stop offset="1" stopColor="#fdb813" /></linearGradient></defs><g stroke="none"><path d="M0 2Q0 0 2 0H10L13 3.500H28V10H0Z" fill="#e2a00c" /><path d="M0 6Q0 5 1.500 5H11L13.500 3.500H28.500Q30 3.500 30 5V25Q30 27 28 27H2Q0 27 0 25Z" fill="url(#exG)" /><path d="M5 27V22Q5 19 8 19H22Q25 19 25 22V27Z" fill="#1573c9" /></g><path d="M9 22.500H21" stroke="#0c4f9a" strokeWidth="1.500" /></Icon>
      </TaskItem>
      <TaskItem left="ml-[25px]">
        <Icon w={29} className="mt-px"><g stroke="none"><path d="M0 4H29V24Q29 29 24 29H5Q0 29 0 24Z" fill="#f1f1f2" /><rect x="9" y="11" width="5" height="5" fill="#f25022" /><rect x="15" y="11" width="5" height="5" fill="#7fba00" /><rect x="9" y="17" width="5" height="5" fill="#00a4ef" /><rect x="15" y="17" width="5" height="5" fill="#ffb900" /></g><path d="M8 5V1H21V5" stroke="#25a7e8" strokeWidth="2" strokeLinecap="butt" /></Icon>
      </TaskItem>
      <TaskItem left="ml-[26px]">
        <Icon w={30}><defs><linearGradient id="edG" x1="0" y1="0" x2="1" y2=".3"><stop offset="0" stopColor="#2aa9df" /><stop offset=".6" stopColor="#35c8c8" /><stop offset="1" stopColor="#6ae05f" /></linearGradient><linearGradient id="edB" x1="0" y1="0" x2="0" y2="1"><stop offset="0" stopColor="#27a1e8" /><stop offset="1" stopColor="#0c5fc4" /></linearGradient></defs><g stroke="none">
          <path d="M15 0C23.300 0 30 5.800 30 13 30 15 29.600 16.600 28.500 18L27.500 23C25 27.500 20.500 30 15 30 6.700 30 0 23.300 0 15S6.700 0 15 0Z" fill="url(#edB)" />
          <path d="M0 14C1 5 7 0 15 0 24 0 30 6 30 13 30 18 26 20.500 22 20.500 18 20.500 17 19 18 17 20 12 15 8 10 9 5 9 1 11 0 14Z" fill="url(#edG)" />
          <path d="M12 12C9 15 9 21 13 25 17 28 22 28 27 23.500 24 28.500 18 31 13 29.800 5 27 5 15 12 12Z" fill="#1254a6" />
          <path d="M13 12C17 10 20 14 18 17.500 17 19.500 19 21 22 21.300 25 21.500 27.500 20.500 29.500 18L30 19.500 27.800 23C22 25 12 23 11.500 16.500 11.500 14.500 12 13 13 12Z" fill="#14356f" />
          <path d="M14 12.300C17.500 11.500 19.500 14.500 17.800 17.500 17 19.500 18 20.500 20 21.500 15 21.500 12 18.500 12 15.500 12 13.500 13 12.500 14 12.300Z" fill="#202024" />
        </g></Icon>
      </TaskItem>
      <div className="ml-[15px] mt-[4px] h-[50px] w-[50px] rounded-[5px] border border-[#3a3a40] bg-[#2a2a2e]">
        <div className="flex h-full w-[44px] flex-col items-center rounded-[5px] border-r border-[#3d3d43] bg-[#303034]">
          <Brave w={25} h={30} className="ml-[4px] mt-[9px]" />
          <i className="ml-[4px] mt-[5px] h-1 w-5 rounded-full bg-[#f07c60]" />
        </div>
      </div>
      <TaskItem left="ml-[15px]" on className="w-[30px]">
        <div className="relative mt-[2px]">
          <Icon w={30} h={26}><g stroke="none"><circle cx="24" cy="6" r="3.500" fill="#5058c5" /><circle cx="16" cy="4.500" r="4.800" fill="#7b83eb" /><path d="M18 9H30V18C30 25 20 25 20 19Z" fill="#5058c5" /><path d="M8 9H24V18C24 29 9 29 9 18Z" fill="#7b83eb" /><rect y="5" width="15" height="16" rx="1.500" fill="#4b53bc" /></g><path d="M4.500 9.500H10.500M7.500 9.500V16.500" stroke="#fff" strokeWidth="2" strokeLinecap="butt" /></Icon>
          <span className="absolute -top-[9px] left-[16px] grid size-5 place-items-center rounded-full bg-[#c42b1c] text-[15px] leading-none">7</span>
        </div>
      </TaskItem>
      <TaskItem left="ml-[29px]" on>
        <Icon w={22} h={30}><g stroke="none"><rect y="2" width="22" height="28" rx="1.500" fill="#9a4f14" /><rect y="2" width="22" height="26" rx="1" fill="#f4f4f4" /><rect y="2" width="22" height="24" rx="1" fill="#55c7e3" /></g><path d="M4 9.500H18M4 14.500H18M4 19.500H18" stroke="#0c6585" strokeWidth="2" strokeLinecap="butt" /><path d="M3.500 1V3M8.500 1V3M13.500 1V3M18.500 1V3" stroke="#12789a" strokeWidth="2.400" /></Icon>
      </TaskItem>
      <div className="ml-auto flex items-center">
        <Icon w={30} h={30} className="-mt-[3px]"><defs><linearGradient id="clG" x1="0" y1="0" x2="0" y2="1"><stop offset="0" stopColor="#c6dbfa" /><stop offset="1" stopColor="#7ea5ec" /></linearGradient></defs><g stroke="none"><path d="M12 0C18 4 18 12 12 16 8 19 2 17 0 13 7 15 13 8 12 0Z" fill="#f3a127" /><path d="M7 30C-2 30-2 19 6 19 8 9 22 9 24 18 32 18 32 30 24 30Z" fill="url(#clG)" /></g></Icon>
        <div className="ml-[9px]">
          <Fit w={32} className="text-[14px] leading-5">20°C</Fit>
          <Fit w={95} className="text-[14px] leading-5 text-[#bcbbc0]">Mostly cloudy</Fit>
        </div>
        <Icon w={13} h={8} sw={2} className="ml-[69px]"><path d="M.5 7 6.500 1 12.500 7" /></Icon>
        <Icon w={20} h={13} className="ml-[24px]"><g stroke="none"><path d="M5 13C-1.500 13-1.500 5 4.500 4.500 7-2 14-.5 15 4 21.500 4 21 13 16 13Z" fill="#f4f4f4" /><path d="M.3 9C-.5 6 2 4.500 4.500 4.500 7-2 14-.5 15 4L5 11.500Z" fill="#a5a5a7" /></g></Icon>
        <Icon w={20} h={16} className="ml-[20px]"><path d="M5 14C-1.500 14-1.500 6 4.500 5.500 7-1 14 .5 15 5 21.500 5 21 14 16 14Z" fill="#1f8fe6" stroke="none" /><path d="M3 .5 17 15.500" stroke="#202020" strokeWidth="2.400" /><path d="M3 .5 17 15.500" stroke="#909090" /></Icon>
        <Icon w={20} h={20} className="ml-[20px]"><path d="M4 9V5C4 .5 13 .5 13 5V9" stroke="#a6a6a6" strokeWidth="2.600" /><rect x="1" y="8" width="16" height="11" fill="#f7c80c" stroke="none" /><rect x="8" y="11" width="2" height="5" fill="#332a00" stroke="none" /><circle cx="15.500" cy="15.500" r="4" fill="#666" stroke="#ccc" /><path d="M13 18 18 13" stroke="#ccc" /></Icon>
        <div className="ml-[24px] flex flex-col items-center">
          <Fit w={28} className="text-[14px] leading-5">ENG</Fit>
          <Fit w={18} className="text-[14px] leading-5">US</Fit>
        </div>
        <Icon w={20} h={15} sw={1.700} className="ml-[23px]"><path d="M.8 5.500Q10-2.500 19.200 5.500M4 8.500Q10 3.500 16 8.500M7 11.500Q10 9 13 11.500" /><circle cx="10" cy="13.500" r="1.300" fill="currentColor" stroke="none" /></Icon>
        <Icon w={20} h={16} sw={1.500} className="ml-[10px]"><path d="M1 5.500V10.500H4L8 14.500V1.500L4 5.500ZM11 5.500Q12.800 8 11 10.500M13.500 3.500Q17 8 13.500 12.500M16.200 1.500Q21.500 8 16.200 14.500" /></Icon>
        <Icon w={20} h={13} sw={1.600} className="ml-[10px]"><rect x=".8" y=".8" width="16" height="11.400" rx="3" /><rect x="3.500" y="3.500" width="10.600" height="6" rx="1" fill="currentColor" stroke="none" /><path d="M19 5V8" strokeWidth="2" /></Icon>
        <div className="ml-[21px] mr-[23px] flex flex-col items-end">
          <Fit w={54} className="text-[14px] leading-5">8:34 PM</Fit>
          <Fit w={77} className="text-[14px] leading-5">21/07/2025</Fit>
        </div>
      </div>
    </div>
  );
}

export default function App() {
  return (
    <div className="h-[1079px] w-[1919px] overflow-hidden bg-[#1b1a19] font-['Noto_Sans',sans-serif]">
      <TabStrip />
      <div className="h-[94px] border-b-2 border-[#2c2b31] bg-[#3b3a3f]">
        <AddressRow />
        <BookmarksRow />
      </div>
      <AzureHeader />
      <BladeHeader />
      <CommandBar />
      <Designer />
      <Taskbar />
    </div>
  );
}
